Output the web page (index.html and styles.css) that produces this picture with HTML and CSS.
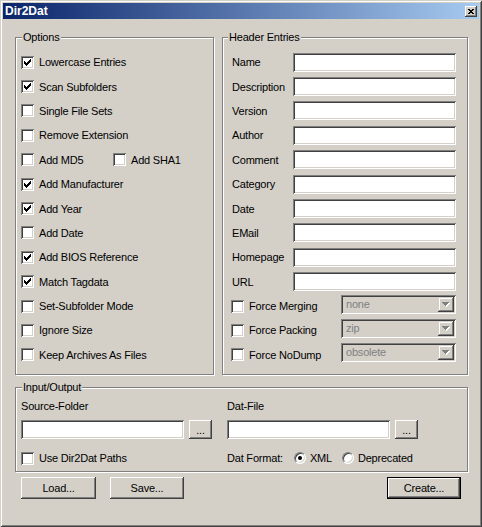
FILE: index.html
```html
<!DOCTYPE html>
<html>
<head>
<meta charset="utf-8">
<title>Dir2Dat</title>
<link rel="stylesheet" href="styles.css">
</head>
<body>
<div class="window">
  <div class="titlebar">
    <span class="title">Dir2Dat</span>
    <span class="close"><svg width="6" height="5" viewBox="0 0 6 5" shape-rendering="crispEdges"><path d="M0 0h2v1h-2zM4 0h2v1h-2zM1 1h4v1h-4zM2 2h2v1h-2zM1 3h4v1h-4zM0 4h2v1h-2zM4 4h2v1h-2z" fill="#000"/></svg></span>
  </div>
  <div class="client">
    <div class="top">
      <div class="group options">
        <span class="caption">Options</span>
        <div class="row"><span class="cb"><svg class="chk" width="7" height="7" viewBox="0 0 7 7" shape-rendering="crispEdges"><path d="M0 2H1V3H2V4H3V3H4V2H5V1H6V0H7V3H6V4H5V5H4V6H3V7H2V6H1V5H0Z"/></svg></span><span>Lowercase Entries</span></div>
        <div class="row"><span class="cb"><svg class="chk" width="7" height="7" viewBox="0 0 7 7" shape-rendering="crispEdges"><path d="M0 2H1V3H2V4H3V3H4V2H5V1H6V0H7V3H6V4H5V5H4V6H3V7H2V6H1V5H0Z"/></svg></span><span>Scan Subfolders</span></div>
        <div class="row"><span class="cb"></span><span>Single File Sets</span></div>
        <div class="row"><span class="cb"></span><span>Remove Extension</span></div>
        <div class="row"><span class="pair"><span class="cb"></span><span>Add MD5</span></span><span class="cb"></span><span>Add SHA1</span></div>
        <div class="row"><span class="cb"><svg class="chk" width="7" height="7" viewBox="0 0 7 7" shape-rendering="crispEdges"><path d="M0 2H1V3H2V4H3V3H4V2H5V1H6V0H7V3H6V4H5V5H4V6H3V7H2V6H1V5H0Z"/></svg></span><span>Add Manufacturer</span></div>
        <div class="row"><span class="cb"><svg class="chk" width="7" height="7" viewBox="0 0 7 7" shape-rendering="crispEdges"><path d="M0 2H1V3H2V4H3V3H4V2H5V1H6V0H7V3H6V4H5V5H4V6H3V7H2V6H1V5H0Z"/></svg></span><span>Add Year</span></div>
        <div class="row"><span class="cb"></span><span>Add Date</span></div>
        <div class="row"><span class="cb"><svg class="chk" width="7" height="7" viewBox="0 0 7 7" shape-rendering="crispEdges"><path d="M0 2H1V3H2V4H3V3H4V2H5V1H6V0H7V3H6V4H5V5H4V6H3V7H2V6H1V5H0Z"/></svg></span><span>Add BIOS Reference</span></div>
        <div class="row"><span class="cb"><svg class="chk" width="7" height="7" viewBox="0 0 7 7" shape-rendering="crispEdges"><path d="M0 2H1V3H2V4H3V3H4V2H5V1H6V0H7V3H6V4H5V5H4V6H3V7H2V6H1V5H0Z"/></svg></span><span>Match Tagdata</span></div>
        <div class="row"><span class="cb"></span><span>Set-Subfolder Mode</span></div>
        <div class="row"><span class="cb"></span><span>Ignore Size</span></div>
        <div class="row"><span class="cb"></span><span>Keep Archives As Files</span></div>
      </div>
      <div class="group header">
        <span class="caption">Header Entries</span>
        <div class="row"><span class="hlabel">Name</span><span class="edit"></span></div>
        <div class="row"><span class="hlabel">Description</span><span class="edit"></span></div>
        <div class="row"><span class="hlabel">Version</span><span class="edit"></span></div>
        <div class="row"><span class="hlabel">Author</span><span class="edit"></span></div>
        <div class="row"><span class="hlabel">Comment</span><span class="edit"></span></div>
        <div class="row"><span class="hlabel">Category</span><span class="edit"></span></div>
        <div class="row"><span class="hlabel">Date</span><span class="edit"></span></div>
        <div class="row"><span class="hlabel">EMail</span><span class="edit"></span></div>
        <div class="row"><span class="hlabel">Homepage</span><span class="edit"></span></div>
        <div class="row"><span class="hlabel">URL</span><span class="edit"></span></div>
        <div class="row force"><span class="cb"></span><span>Force Merging</span><span class="combo"><span class="val">none</span><span class="drop"><svg width="8" height="5" viewBox="0 0 8 5" shape-rendering="crispEdges"><path transform="translate(1 1)" fill="#fff" d="M0 0H7V1H6V2H5V3H4V4H3V3H2V2H1V1H0Z"/><path fill="#808080" d="M0 0H7V1H6V2H5V3H4V4H3V3H2V2H1V1H0Z"/></svg></span></span></div>
        <div class="row force"><span class="cb"></span><span>Force Packing</span><span class="combo"><span class="val">zip</span><span class="drop"><svg width="8" height="5" viewBox="0 0 8 5" shape-rendering="crispEdges"><path transform="translate(1 1)" fill="#fff" d="M0 0H7V1H6V2H5V3H4V4H3V3H2V2H1V1H0Z"/><path fill="#808080" d="M0 0H7V1H6V2H5V3H4V4H3V3H2V2H1V1H0Z"/></svg></span></span></div>
        <div class="row force"><span class="cb"></span><span>Force NoDump</span><span class="combo"><span class="val">obsolete</span><span class="drop"><svg width="8" height="5" viewBox="0 0 8 5" shape-rendering="crispEdges"><path transform="translate(1 1)" fill="#fff" d="M0 0H7V1H6V2H5V3H4V4H3V3H2V2H1V1H0Z"/><path fill="#808080" d="M0 0H7V1H6V2H5V3H4V4H3V3H2V2H1V1H0Z"/></svg></span></span></div>
      </div>
    </div>
    <div class="group io">
      <span class="caption">Input/Output</span>
      <div class="iolabel">Source-Folder</div>
      <div class="iolabel">Dat-File</div>
      <div class="iorow"><span class="edit"></span><span class="btn browse">...</span></div>
      <div class="iorow"><span class="edit"></span><span class="btn browse">...</span></div>
      <div class="iorow"><span class="cb"></span><span>Use Dir2Dat Paths</span></div>
      <div class="iorow"><span>Dat Format:</span><span class="radio on"></span><span class="rlabel">XML</span><span class="radio"></span><span class="rlabel">Deprecated</span></div>
    </div>
    <div class="buttons">
      <span class="btn">Load...</span>
      <span class="btn save">Save...</span>
      <span class="btn default">Create...</span>
    </div>
  </div>
</div>
</body>
</html>
```
FILE: styles.css
```css
* { box-sizing: border-box; }
html, body { margin: 0; padding: 0; }
body {
  background: #d4d0c8;
  font-family: "Liberation Sans", Arial, sans-serif;
  font-size: 11px;
  letter-spacing: -0.2px;
  color: #000;
}
.window {
  width: 482px;
  height: 527px;
  padding: 3px;
  background: #d4d0c8;
  box-shadow: inset 1px 1px #d4d0c8, inset -1px -1px #404040, inset 2px 2px #fff, inset -2px -2px #808080;
  display: flex;
  flex-direction: column;
}
.titlebar {
  height: 16px;
  flex: none;
  display: flex;
  align-items: center;
  justify-content: space-between;
  padding: 0 2px;
  background: linear-gradient(to right, #0a246a, #a6caf0);
  color: #fff;
}
.title { font-weight: bold; font-size: 12px; letter-spacing: 0; }
.close {
  width: 12px;
  height: 11px;
  background: #d4d0c8;
  box-shadow: inset -1px -1px #404040, inset 1px 1px #fff, inset -2px -2px #808080;
  display: flex;
  align-items: center;
  justify-content: center;
}
.client {
  flex: 1;
  padding: 18px 11px 0 12px;
  display: flex;
  flex-direction: column;
}
.top { display: flex; gap: 8px; height: 338px; flex: none; }
.group {
  position: relative;
  border: 1px solid #808080;
  box-shadow: inset 1px 1px #fff, 1px 1px #fff;
}
.caption {
  position: absolute;
  top: -7px;
  left: 6px;
  padding: 0 1px;
  line-height: 13px;
  background: #d4d0c8;
  white-space: nowrap;
}
.header .caption { left: 5px; }
.options { width: 199px; padding: 12px 0 0 5px; }
.header { flex: 1; padding: 12px 11px 0 9px; }
.row {
  height: 24.4px;
  display: flex;
  align-items: center;
  white-space: nowrap;
}
.cb {
  width: 13px;
  height: 13px;
  flex: none;
  margin-right: 5px;
  background: #fff;
  box-shadow: inset 1px 1px #808080, inset -1px -1px #fff, inset 2px 2px #404040, inset -2px -2px #d4d0c8;
  display: flex;
  align-items: center;
  justify-content: center;
}
.chk { display: block; fill: #000; }
.pair { width: 92px; display: flex; align-items: center; flex: none; }
.hlabel { width: 61px; flex: none; }
.edit {
  flex: 1;
  height: 19px;
  background: #fff;
  box-shadow: inset 1px 1px #808080, inset -1px -1px #fff, inset 2px 2px #404040, inset -2px -2px #d4d0c8;
}
.force .cb { margin-left: -1px; }
.combo {
  margin-left: auto;
  margin-bottom: 4px;
  width: 115px;
  height: 19px;
  padding: 2px;
  display: flex;
  background: #d4d0c8;
  box-shadow: inset 1px 1px #808080, inset -1px -1px #fff, inset 2px 2px #404040, inset -2px -2px #d4d0c8;
}
.val { flex: 1; padding-left: 3px; line-height: 15px; color: #808080; }
.drop {
  width: 16px;
  height: 15px;
  flex: none;
  background: #d4d0c8;
  box-shadow: inset -1px -1px #404040, inset 1px 1px #d4d0c8, inset -2px -2px #808080, inset 2px 2px #fff;
  display: flex;
  align-items: center;
  justify-content: center;
}
.drop svg { display: block; }
.io {
  height: 85px;
  flex: none;
  margin-top: 12px;
  padding: 11px 0 0 5px;
  display: grid;
  grid-template-columns: 206px 1fr;
  grid-template-rows: 14px 19px 24px;
  row-gap: 7px;
}
.iolabel { line-height: 14px; }
.iorow { display: flex; align-items: center; white-space: nowrap; }
.iorow .edit { flex: none; width: 163px; height: 19px; }
.btn {
  width: 75px;
  height: 22px;
  flex: none;
  background: #d4d0c8;
  box-shadow: inset -1px -1px #404040, inset 1px 1px #fff, inset -2px -2px #808080;
  display: flex;
  align-items: center;
  justify-content: center;
}
.browse { width: 23px; height: 19px; margin-left: 5px; }
.radio {
  width: 12px;
  height: 12px;
  flex: none;
  margin-left: 11px;
  border-radius: 50%;
  background: #fff;
  border: 1px solid;
  border-color: #808080 #fff #fff #808080;
  box-shadow: inset 1px 1px #404040, inset -1px -1px #d4d0c8;
  display: flex;
  align-items: center;
  justify-content: center;
}
.radio.on::after {
  content: "";
  width: 4px;
  height: 4px;
  border-radius: 50%;
  background: #000;
}
.rlabel { margin-left: 4px; }
.radio + .rlabel + .radio { margin-left: 10px; }
.buttons {
  margin-top: 5px;
  display: flex;
  padding: 0 7px 0 6px;
}
.save { margin-left: 14px; width: 74px; }
.default {
  margin-left: auto;
  width: 74px;
  box-shadow: inset 0 0 0 1px #000, inset -2px -2px #404040, inset 2px 2px #fff, inset -3px -3px #808080;
}
```
